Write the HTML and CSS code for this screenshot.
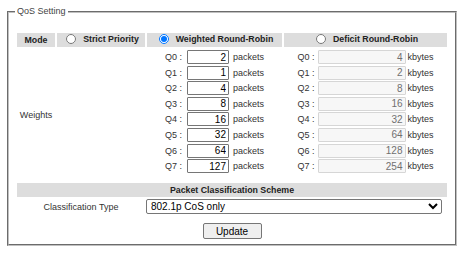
FILE: index.html
```html
<!DOCTYPE html>
<html lang="en">
<head>
    <meta charset="UTF-8">
    <title>QoS Setting</title>
    <link rel="stylesheet" href="styles.css">
</head>
<body>
    <fieldset class="qos">
        <legend>QoS Setting</legend>
        <table class="qos-table">
            <colgroup>
                <col class="col-mode">
                <col class="col-sp">
                <col class="col-wrr">
                <col class="col-drr">
            </colgroup>
            <tr class="head">
                <td>Mode</td>
                <td><label class="radio"><input type="radio" name="mode"> Strict Priority</label></td>
                <td><label class="radio"><input type="radio" name="mode" checked> Weighted Round-Robin</label></td>
                <td><label class="radio"><input type="radio" name="mode"> Deficit Round-Robin</label></td>
            </tr>
            <tr class="weights">
                <td class="weights-label">Weights</td>
                <td></td>
                <td>
                    <div class="q-list">
                        <div class="q-row"><span class="q-name">Q0 :</span><input class="q-in" type="text" value="2"><span>packets</span></div>
                        <div class="q-row"><span class="q-name">Q1 :</span><input class="q-in" type="text" value="1"><span>packets</span></div>
                        <div class="q-row"><span class="q-name">Q2 :</span><input class="q-in" type="text" value="4"><span>packets</span></div>
                        <div class="q-row"><span class="q-name">Q3 :</span><input class="q-in" type="text" value="8"><span>packets</span></div>
                        <div class="q-row"><span class="q-name">Q4 :</span><input class="q-in" type="text" value="16"><span>packets</span></div>
                        <div class="q-row"><span class="q-name">Q5 :</span><input class="q-in" type="text" value="32"><span>packets</span></div>
                        <div class="q-row"><span class="q-name">Q6 :</span><input class="q-in" type="text" value="64"><span>packets</span></div>
                        <div class="q-row"><span class="q-name">Q7 :</span><input class="q-in" type="text" value="127"><span>packets</span></div>
                    </div>
                </td>
                <td>
                    <div class="q-list">
                        <div class="q-row"><span class="q-name">Q0 :</span><input class="q-in wide" type="text" value="4" disabled><span>kbytes</span></div>
                        <div class="q-row"><span class="q-name">Q1 :</span><input class="q-in wide" type="text" value="2" disabled><span>kbytes</span></div>
                        <div class="q-row"><span class="q-name">Q2 :</span><input class="q-in wide" type="text" value="8" disabled><span>kbytes</span></div>
                        <div class="q-row"><span class="q-name">Q3 :</span><input class="q-in wide" type="text" value="16" disabled><span>kbytes</span></div>
                        <div class="q-row"><span class="q-name">Q4 :</span><input class="q-in wide" type="text" value="32" disabled><span>kbytes</span></div>
                        <div class="q-row"><span class="q-name">Q5 :</span><input class="q-in wide" type="text" value="64" disabled><span>kbytes</span></div>
                        <div class="q-row"><span class="q-name">Q6 :</span><input class="q-in wide" type="text" value="128" disabled><span>kbytes</span></div>
                        <div class="q-row"><span class="q-name">Q7 :</span><input class="q-in wide" type="text" value="254" disabled><span>kbytes</span></div>
                    </div>
                </td>
            </tr>
            <tr class="head">
                <td colspan="4">Packet Classification Scheme</td>
            </tr>
            <tr class="class-row">
                <td colspan="2" class="class-label">Classification Type</td>
                <td colspan="2">
                    <select class="class-select">
                        <option selected>802.1p CoS only</option>
                        <option>DSCP only</option>
                        <option>802.1p CoS and DSCP</option>
                    </select>
                </td>
            </tr>
            <tr>
                <td colspan="4" class="actions"><button class="btn">Update</button></td>
            </tr>
        </table>
    </fieldset>
</body>
</html>
```

FILE: styles.css
```css
body {
    margin: 0;
    padding: 0;
    background-color: #fff;
    font-family: "Liberation Sans", Arial, sans-serif;
    font-size: 9px;
    color: #333;
}
.qos {
    width: 434px;
    margin: 5px 0 0 7px;
    padding: 2px 6px 3px;
    border: 2px groove #c0c0c0;
}
.qos legend {
    padding: 0 2px;
    line-height: 13px;
    color: #444;
}
.qos-table {
    width: 434px;
    margin-top: 11px;
    table-layout: fixed;
    border-spacing: 2px;
}
.col-mode { width: 38px; }
.col-sp { width: 88px; }
.col-wrr { width: 135px; }
.col-drr { width: 163px; }
.qos-table td {
    padding: 0;
    text-align: center;
    vertical-align: middle;
}
.head td {
    height: 14px;
    background-color: #ddd;
    font-size: 8.8px;
    font-weight: bold;
    color: #222;
}
.radio {
    display: inline-flex;
    align-items: center;
    gap: 7px;
    margin-left: 3px;
}
.radio input {
    width: 10px;
    height: 10px;
    margin: 0;
    accent-color: #0075ff;
}
.weights td {
    padding: 1px 0 8px;
}
.weights .weights-label {
    padding: 0;
}
.q-list {
    display: flex;
    flex-direction: column;
    gap: 1.6px;
}
.q-row {
    display: flex;
    align-items: center;
    justify-content: center;
    height: 14px;
}
.q-in {
    box-sizing: border-box;
    width: 42px;
    height: 14px;
    margin: 0 4px 0 5px;
    padding: 0 2px;
    border: 1px solid #767676;
    border-radius: 1px;
    font-family: "Liberation Sans", Arial, sans-serif;
    font-size: 10px;
    text-align: right;
    color: #000;
    background-color: #fff;
}
.q-in.wide {
    width: 88px;
    margin: 0 2px 0 3px;
    border-color: #d6d6d6;
    background-color: #f7f7f7;
    color: #707070;
}
.class-label {
    color: #333;
}
.class-select {
    box-sizing: border-box;
    width: 296px;
    height: 15px;
    margin-left: -1px;
    padding: 0;
    border: 1px solid #767676;
    border-radius: 2px;
    font-family: "Liberation Sans", Arial, sans-serif;
    font-size: 10px;
    color: #000;
    background-color: #fff;
    display: block;
}
.qos-table .actions {
    padding-top: 7px;
}
.btn {
    box-sizing: border-box;
    width: 59px;
    height: 16px;
    padding: 0;
    border: 1px solid #767676;
    border-radius: 2px;
    background-color: #efefef;
    font-family: "Liberation Sans", Arial, sans-serif;
    font-size: 10px;
    color: #000;
    cursor: pointer;
}
.btn:hover {
    background-color: #e5e5e5;
}
```
